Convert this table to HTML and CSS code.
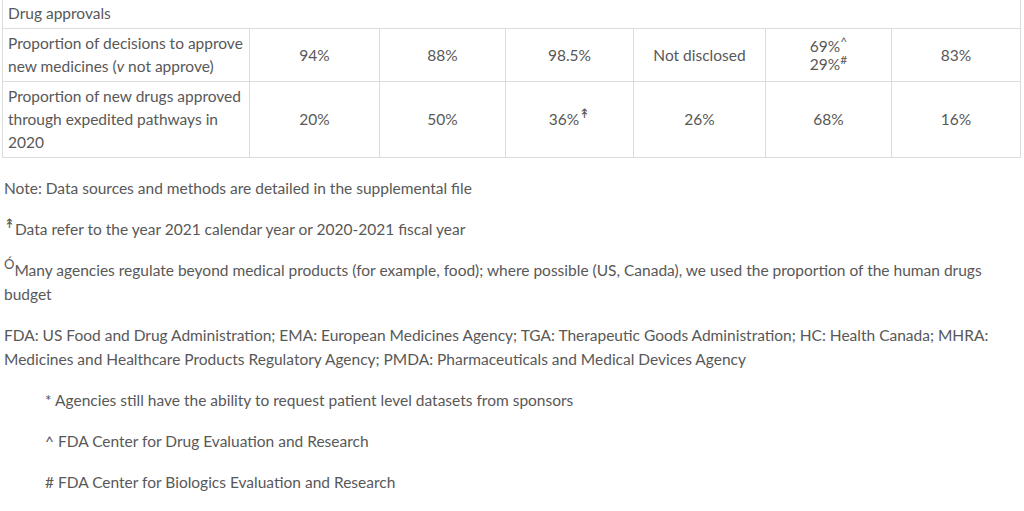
FILE: index.html
```html
<!DOCTYPE html>
<html lang="en">
<head>
<meta charset="utf-8">
<title>Drug approvals</title>
<link rel="stylesheet" href="styles.css">
</head>
<body>
<div class="page">
  <table class="data">
    <colgroup>
      <col class="c-label">
      <col class="c1"><col class="c2"><col class="c3"><col class="c4"><col class="c5"><col class="c6">
    </colgroup>
    <tbody>
      <tr class="section">
        <td colspan="7">Drug approvals</td>
      </tr>
      <tr class="r2">
        <td class="label">Proportion of decisions to approve new medicines (<i>v</i> not approve)</td>
        <td>94%</td>
        <td>88%</td>
        <td>98.5%</td>
        <td>Not disclosed</td>
        <td class="tight">69%<sup>^</sup><br>29%<sup>#</sup></td>
        <td>83%</td>
      </tr>
      <tr class="r3">
        <td class="label">Proportion of new drugs approved through expedited pathways in 2020</td>
        <td>20%</td>
        <td>50%</td>
        <td>36%<sup class="arrow">↟</sup></td>
        <td>26%</td>
        <td>68%</td>
        <td>16%</td>
      </tr>
    </tbody>
  </table>

  <div class="notes">
    <p>Note: Data sources and methods are detailed in the supplemental file</p>
    <p><sup class="mark">↟</sup>Data refer to the year 2021 calendar year or 2020-2021 fiscal year</p>
    <p><sup class="mark">Ó</sup>Many agencies regulate beyond medical products (for example, food); where possible (US, Canada), we used the proportion of the human drugs budget</p>
    <p>FDA: US Food and Drug Administration; EMA: European Medicines Agency; TGA: Therapeutic Goods Administration; HC: Health Canada; MHRA: Medicines and Healthcare Products Regulatory Agency; PMDA: Pharmaceuticals and Medical Devices Agency</p>
    <div class="footnotes">
      <p>* Agencies still have the ability to request patient level datasets from sponsors</p>
      <p>^ FDA Center for Drug Evaluation and Research</p>
      <p># FDA Center for Biologics Evaluation and Research</p>
    </div>
  </div>
</div>
</body>
</html>
```
FILE: styles.css
```css
html, body {
  margin: 0;
  padding: 0;
  background: #ffffff;
}

body {
  font-family: Lato, "Open Sans", "Liberation Sans", sans-serif;
  font-size: 15.5px;
  line-height: 24px;
  color: #585858;
}

.page {
  padding: 0 5px 0 2px;
  margin-top: -4px;
}

.data {
  width: 1018px;
  border-collapse: collapse;
  table-layout: fixed;
}

.c-label { width: 247px; }
.c1 { width: 130px; }
.c2 { width: 126px; }
.c3 { width: 128px; }
.c4 { width: 132px; }
.c5 { width: 126px; }
.c6 { width: 129px; }

.data td {
  border: 1px solid #dcdcdc;
  padding: 3px 5px;
  line-height: 23px;
  text-align: center;
  vertical-align: middle;
}

.data .section td {
  text-align: left;
  padding: 4px 5px 3px;
  line-height: 24px;
}

.data td.label {
  text-align: left;
  padding-right: 3px;
}

.data td.tight {
  line-height: 18px;
}

sup {
  font-size: 12px;
  line-height: 0;
  vertical-align: 6px;
}

sup.arrow {
  font-size: 13px;
  vertical-align: 7px;
}

sup.mark {
  font-size: 13px;
  vertical-align: 7px;
}

.notes {
  padding-left: 2px;
  margin-top: 18px;
}

.notes p {
  margin: 0 0 17px;
}

.footnotes {
  padding-left: 41px;
}
```
